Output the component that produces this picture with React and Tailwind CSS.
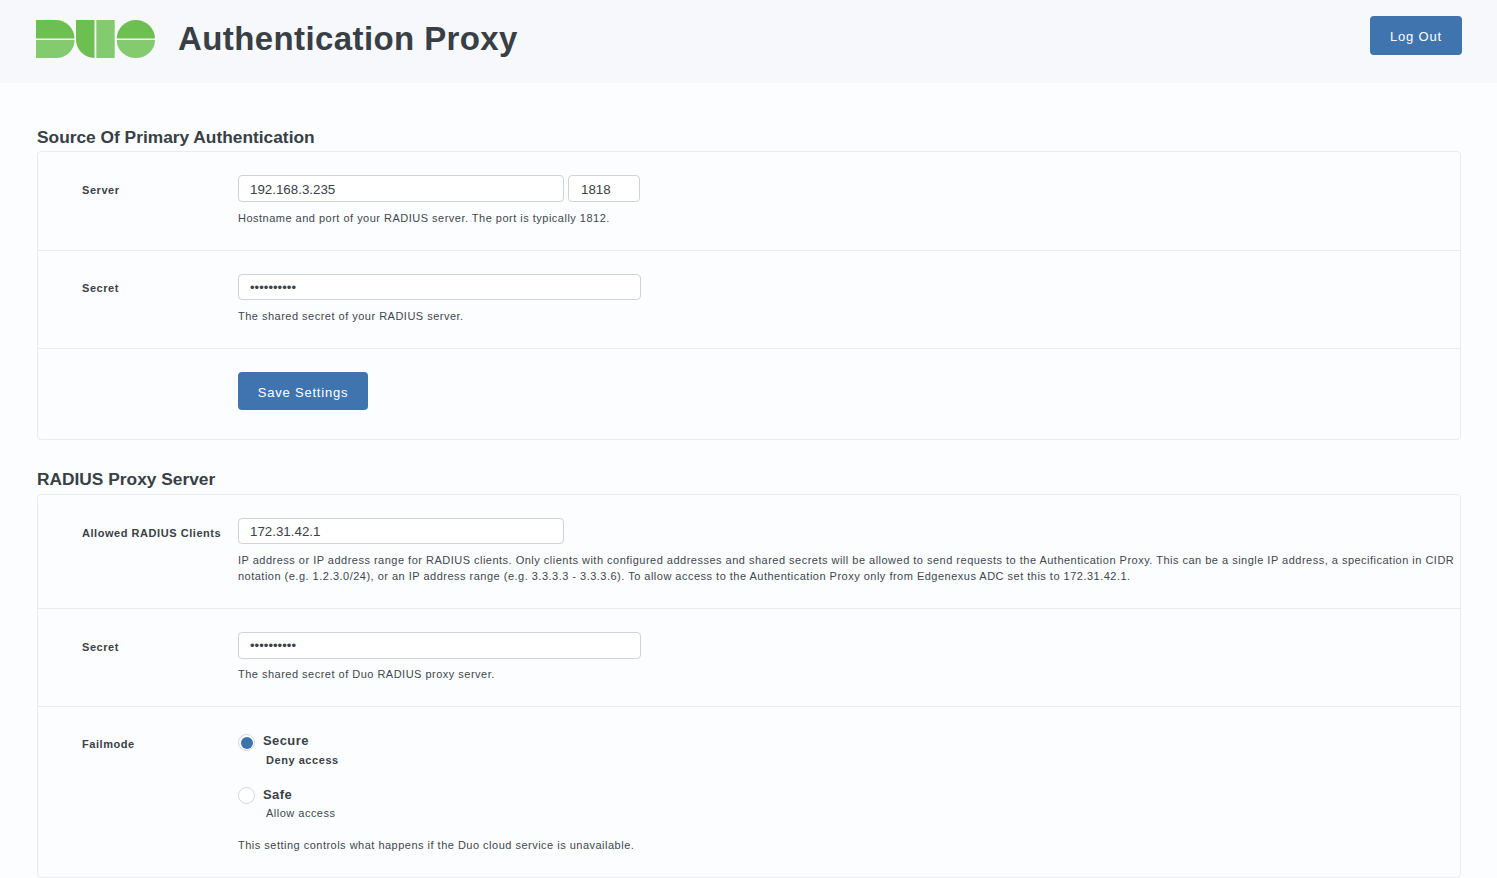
import React from "react";

const FONT = "font-['Liberation_Sans',Arial,sans-serif]";

// Duo wordmark, viewBox is in page pixels from the logo's top-left corner.
function DuoLogo() {
  return (
    <svg width="119" height="38" viewBox="0 0 119 38" className="shrink-0">
      <path d="M0 0H20A18.5 18.5 0 0 1 38.5 18.5H0Z" fill="#6dbf52" />
      <path d="M0 20H38.5A18 18 0 0 1 20 38H0Z" fill="#84ca6e" />
      <path d="M40 0H58.5V38A18.5 18.5 0 0 1 40 19.5Z" fill="#6dbf52" />
      <path d="M60.3 0H78.7V38H60.3Z" fill="#84ca6e" />
      <path d="M80.7 18.5A19.15 18.5 0 0 1 119 18.5Z" fill="#6dbf52" />
      <path d="M80.7 20H119A19.15 18 0 0 1 80.7 20Z" fill="#84ca6e" />
    </svg>
  );
}

function TextBox({ value, className = "w-[403px] h-[26px] pl-[11px]", dots }) {
  return (
    <div className={`rounded-[4px] border border-[#cfd2d6] bg-white flex items-center text-[13.33px] text-[#3a4147] ${className}`}>
      {dots ? <span className="pt-[1px] text-[13px] tracking-[0.05px]">{value}</span> : <span className="pt-[2px]">{value}</span>}
    </div>
  );
}

function Row({ label, children, className = "", labelClass = "pt-[7px]" }) {
  return (
    <div className={`flex border-b border-[#e9ebef] last:border-b-0 pt-[23px] ${className}`}>
      <div className={`w-[200px] shrink-0 pl-[44px] text-[11px] font-bold tracking-[0.55px] text-[#3a4147] ${labelClass}`}>{label}</div>
      <div className="flex-1 min-w-0 pr-[4px]">{children}</div>
    </div>
  );
}

function Help({ children, className = "mt-[8px]" }) {
  return <p className={`text-[11px] leading-[16px] tracking-[0.49px] text-[#40474d] ${className}`}>{children}</p>;
}

function Radio({ checked }) {
  return (
    <span className="w-[17px] h-[17px] rounded-full border border-[#d3d5d9] bg-white flex items-center justify-center shrink-0">
      {checked && <span className="w-[12px] h-[12px] rounded-full bg-[#3c72ae]" />}
    </span>
  );
}

export default function App() {
  return (
    <div className={`h-screen overflow-hidden bg-[#fcfdff] ${FONT}`}>
      <header className="h-[83px] bg-[#f7f8fc] flex items-center pl-[36px] pr-[35px] pb-[6px]">
        <DuoLogo />
        <h1 className="ml-[23px] text-[33px] font-bold tracking-[0.4px] text-[#383f45]">Authentication Proxy</h1>
        <button className="ml-auto mb-[7px] pt-[3px] w-[92px] h-[39px] rounded-[4px] bg-[#3f74ae] text-white text-[13px] tracking-[0.8px]">Log Out</button>
      </header>

      <main className="pl-[37px] pr-[36px]">
        <h2 className="mt-[44px] text-[17.33px] leading-[21px] font-bold text-[#383f45]">Source Of Primary Authentication</h2>
        <section className="mt-[3px] rounded-[4px] border border-[#e9ebef]">
          <Row label="Server" className="h-[99px]">
            <div className="flex gap-[4px]">
              <TextBox value="192.168.3.235" className="w-[326px] h-[27px] pl-[11px]" />
              <TextBox value="1818" className="w-[72px] h-[27px] pl-[12px]" />
            </div>
            <Help>Hostname and port of your RADIUS server. The port is typically 1812.</Help>
          </Row>
          <Row label="Secret" className="h-[98px]" labelClass="pt-[6px]">
            <TextBox value="••••••••••" dots />
            <Help>The shared secret of your RADIUS server.</Help>
          </Row>
          <Row label="" className="h-[90px]">
            <button className="pt-[3px] w-[130px] h-[38px] rounded-[4px] bg-[#3f74ae] text-white text-[13px] tracking-[0.8px]">Save Settings</button>
          </Row>
        </section>

        <h2 className="mt-[29px] text-[17.33px] leading-[21px] font-bold text-[#383f45]">RADIUS Proxy Server</h2>
        <section className="mt-[4px] rounded-[4px] border border-[#e9ebef]">
          <Row label="Allowed RADIUS Clients" className="h-[114px]">
            <TextBox value="172.31.42.1" className="w-[326px] h-[26px] pl-[11px]" />
            <Help>
              IP address or IP address range for RADIUS clients. Only clients with configured addresses and shared secrets will be allowed to send requests to the Authentication Proxy. This can be a single IP address, a specification in CIDR notation (e.g. 1.2.3.0/24), or an IP address range (e.g. 3.3.3.3 - 3.3.3.6). To allow access to the Authentication Proxy only from Edgenexus ADC set this to 172.31.42.1.
            </Help>
          </Row>
          <Row label="Secret" className="h-[98px]">
            <TextBox value="••••••••••" className="w-[403px] h-[27px] pl-[11px]" dots />
            <Help className="mt-[7px]">The shared secret of Duo RADIUS proxy server.</Help>
          </Row>
          <Row label="Failmode" className="h-[170px]" labelClass="pt-[6px]">
            <div className="pt-[4px]">
              <div className="flex items-start gap-[8px]">
                <Radio checked />
                <span className="text-[13px] leading-[13px] font-bold tracking-[0.4px] text-[#3a4147]">Secure</span>
              </div>
              <p className="mt-[1px] ml-[28px] text-[11px] leading-[16px] font-bold tracking-[0.55px] text-[#3a4147]">Deny access</p>
              <div className="mt-[19px] flex items-start gap-[8px]">
                <Radio />
                <span className="pt-[1px] text-[13px] leading-[13px] font-bold tracking-[0.4px] text-[#3a4147]">Safe</span>
              </div>
              <p className="mt-[1px] ml-[28px] text-[11px] leading-[16px] tracking-[0.49px] text-[#40474d]">Allow access</p>
              <Help className="mt-[16px]">This setting controls what happens if the Duo cloud service is unavailable.</Help>
            </div>
          </Row>
        </section>
      </main>
    </div>
  );
}
